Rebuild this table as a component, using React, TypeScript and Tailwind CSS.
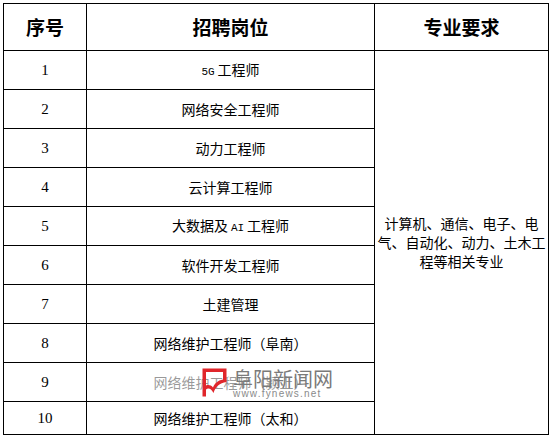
import React from "react";

const cjk = "font-['Noto_Sans_CJK_SC',sans-serif]";
const serif = "font-['Liberation_Serif',serif]";
const mono = "font-['Liberation_Mono',monospace] text-[11px]";

type Row = { no: number; title: React.ReactNode };

const rows: Row[] = [
  {
    no: 1,
    title: (
      <>
        <span className={`${mono} mr-[3px]`}>5G</span>工程师
      </>
    ),
  },
  { no: 2, title: "网络安全工程师" },
  { no: 3, title: "动力工程师" },
  { no: 4, title: "云计算工程师" },
  {
    no: 5,
    title: (
      <>
        大数据及<span className={`${mono} mx-[3px]`}>AI</span>工程师
      </>
    ),
  },
  { no: 6, title: "软件开发工程师" },
  { no: 7, title: "土建管理" },
  { no: 8, title: "网络维护工程师（阜南）" },
  { no: 9, title: "网络维护工程师（颍上）" },
  { no: 10, title: "网络维护工程师（太和）" },
];

function Cell({ children, className = "" }: { children?: React.ReactNode; className?: string }) {
  return (
    <div className={`border-r border-b border-black flex items-center justify-center ${className}`}>
      {children}
    </div>
  );
}

function Watermark() {
  return (
    <>
      {/* translucent band that washes out the row text beneath the logo */}
      <div className="absolute left-[150px] top-[365px] w-[192px] h-[33px] bg-white/60" />
      <div className="absolute left-[202px] top-[368px] flex items-start gap-[6px]">
        <svg width="25" height="29" viewBox="0 0 25 29" className="block shrink-0">
          <path
            fillRule="evenodd"
            fill="#e0262b"
            d="M0.5 0.5 H24.5 V14 C17.5 15 13.5 18.5 11.5 25 C9 20 6 19.5 4 21.5 V28.5 H0.5 Z
               M4 4 H21 V11.5 C15.5 12.5 12.5 15.5 11 19.5 C9 17 6.5 16.5 4 17.5 Z"
          />
        </svg>
        <div className="flex flex-col">
          <span className={`${cjk} text-[20px] leading-[21px] text-[#7a7a7a]`}>阜阳新闻网</span>
          <span className="font-['Liberation_Sans',sans-serif] text-[10px] leading-[10px] text-[#8a8a8a] tracking-[1.2px]">
            www.fynews.net
          </span>
        </div>
      </div>
    </>
  );
}

export default function App() {
  return (
    <div className="relative w-[552px] h-[438px] bg-white pt-[3px] pl-[3px] text-black">
      <div className="grid w-max grid-cols-[83px_288px_174px] grid-rows-[47px_repeat(9,39px)_33px] border-l border-t border-black">
        <Cell className={`${cjk} text-[19px] font-bold`}>序号</Cell>
        <Cell className={`${cjk} text-[19px] font-bold`}>招聘岗位</Cell>
        <Cell className={`${cjk} text-[19px] font-bold`}>专业要求</Cell>

        {rows.map((r, i) => (
          <React.Fragment key={r.no}>
            <Cell className={`${serif} text-[15px]`}>{r.no}</Cell>
            <Cell className={`${cjk} text-[14px]`}>
              <span>{r.title}</span>
            </Cell>
            {i === 0 && (
              <Cell className={`row-span-10 ${cjk} text-[14px] leading-[19px] flex-col text-center whitespace-nowrap`}>
                <span className="block">计算机、通信、电子、电</span>
                <span className="block">气、自动化、动力、土木工</span>
                <span className="block">程等相关专业</span>
              </Cell>
            )}
          </React.Fragment>
        ))}
      </div>
      <Watermark />
    </div>
  );
}
